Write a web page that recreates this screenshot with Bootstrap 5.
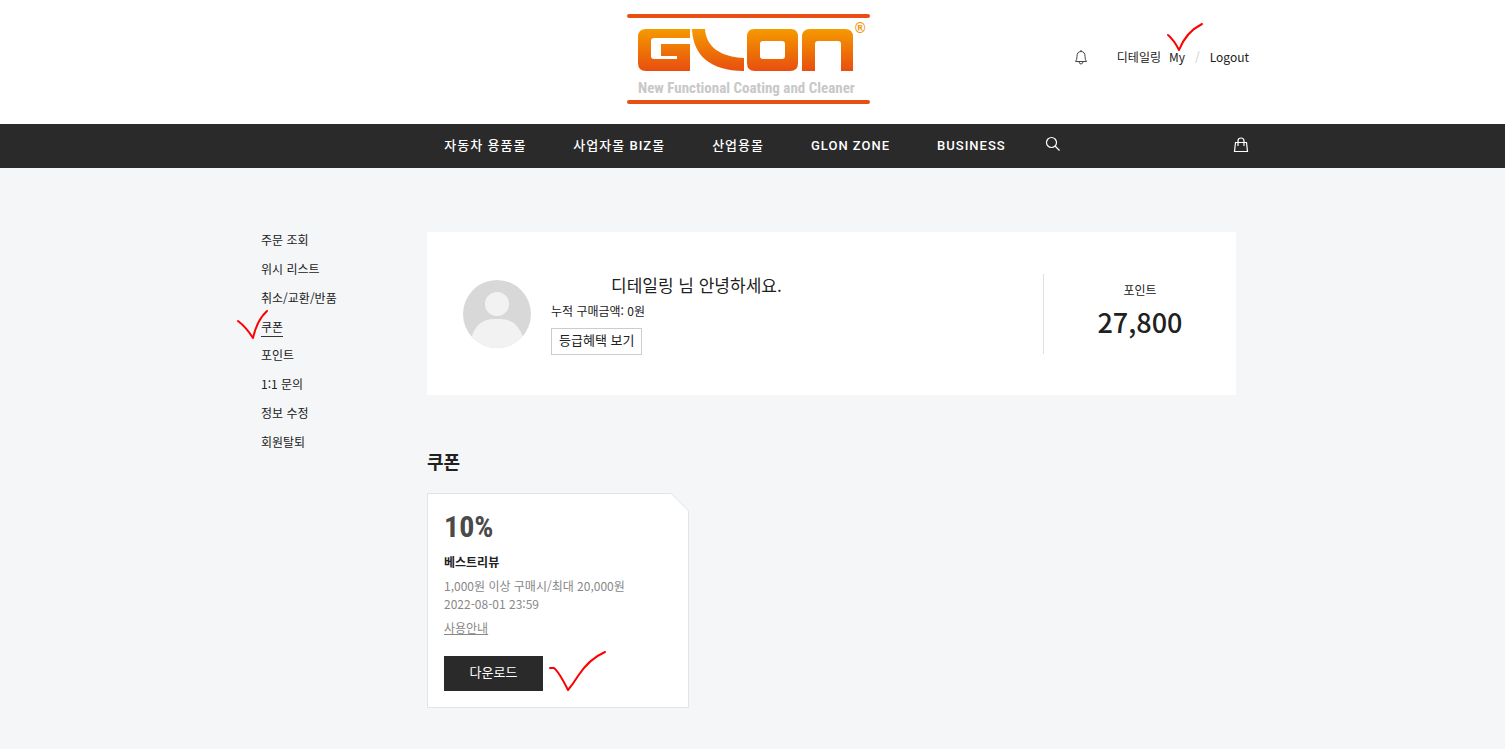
<!DOCTYPE html>
<html lang="ko">
<head>
<meta charset="utf-8">
<meta name="viewport" content="width=device-width, initial-scale=1">
<title>GLON - 쿠폰</title>
<link href="https://cdn.jsdelivr.net/npm/bootstrap@5.3.0/dist/css/bootstrap.min.css" rel="stylesheet">
<style>
  body { background: #f4f6f8; color: #212121; font-family: "Noto Sans CJK KR", sans-serif; font-size: 12px; line-height: 18px; }
  a { color: inherit; text-decoration: none; }
  .wrap { max-width: 993px; margin: 0 auto; }
  .thirds { display: grid; grid-template-columns: 1fr auto 1fr; align-items: center; }
  .tick { position: absolute; pointer-events: none; }
  .tick, .tick-down { fill: none; stroke: #f00; stroke-width: 2; stroke-linecap: round; stroke-linejoin: round; }
  .tick-my { left: -3px; bottom: 14px; }
  .tick-side { left: -25px; bottom: -5px; }
  .tick-down { margin: -6px 0 -1px; }
  .site-head { min-height: 124px; padding-bottom: 6px; }
  .logo { margin-right: 9px; }
  .slash { color: #ccc; margin: 0 10px; }
  .main-nav { background: #2a2a2a; color: #fff; }
  .main-nav .thirds { min-height: 44px; }
  .menu { gap: 47px; font: 500 13px/20px Roboto, "Noto Sans CJK KR", sans-serif; letter-spacing: 1px; }
  .icon-btn { background: none; border: 0; padding: 0; color: inherit; line-height: 0; }
  .main-nav .icon-btn { padding-bottom: 4px; }
  .menu .icon-btn { margin-left: -8px; }
  .page { padding: 63px 13px 41px 5px; }
  .page main { padding-top: 1px; }
  .side { flex: 0 0 166px; gap: 11px; }
  .side .active { border-bottom: 1px solid #333; margin-bottom: -2px; }
  .profile { min-height: 163px; padding-left: 36px; }
  .hello { font-size: 17px; line-height: 24px; font-weight: 400; margin: 0 0 0 60px; }
  .total { margin-top: 5px; }
  .btn-grade { border: 1px solid #ccc; border-radius: 0; font-size: 13px; line-height: 20px; padding: 1px 7px 4px; color: #212121; margin-top: 8px; }
  .points { flex: 0 0 193px; min-height: 80px; border-left: 1px solid #e0e0e0; padding-top: 7px; }
  .points strong { font-size: 27px; line-height: 46px; font-weight: 500; }
  .section-title { font-size: 18px; line-height: 26px; font-weight: 700; margin: 53px 0 19px; }
  .coupon { width: 262px; background: #e2e5e8; padding: 1px; clip-path: polygon(0 0, 244px 0, 100% 18px, 100% 100%, 0 100%); }
  .coupon-in { background: #fff; padding: 18px 16px 16px; clip-path: polygon(0 0, 243px 0, 100% 17px, 100% 100%, 0 100%); }
  .rate { font: 700 30px/30px "Roboto Condensed", Roboto, sans-serif; color: #4a4a4a; }
  .coupon-name { margin-top: 11px; }
  .coupon-info { margin-top: 6px; }
  .guide { margin-top: 6px; }
  .coupon-action { margin-top: 19px; }
  .muted { color: #888; }
  .btn-down { background: #2a2a2a; color: #fff; border: 0; border-radius: 0; width: 99px; height: 35px; font-size: 13px; line-height: 18px; padding: 0 0 4px; }
</style>
</head>
<body>
<header class="bg-white">
  <div class="wrap thirds site-head">
    <span></span>
    <a href="#" class="logo" aria-label="GLON">
      <svg class="d-block" width="243" height="92" viewBox="0 0 243 92">
        <defs><linearGradient id="og" gradientUnits="userSpaceOnUse" x1="0" y1="16" x2="0" y2="58"><stop offset="0" stop-color="#f59a00"/><stop offset="1" stop-color="#e84e0f"/></linearGradient></defs>
        <path d="M2 3H241M2 89H241" stroke="#e94e12" stroke-width="4" stroke-linecap="round"/>
        <g fill="url(#og)">
          <path d="M63 16V25H27Q24 25 24 28V43Q24 46 27 46H50V43H34V31H63V58H19Q11 58 11 50V24Q11 16 19 16Z"/>
          <path d="M65 16H78C79 34 94 44 117 45V58C83 58 66 42 65 16Z"/>
          <path fill-rule="evenodd" d="M127 16H164Q171 16 171 24V50Q171 58 163 58H128Q120 58 120 50V24Q120 16 127 16ZM136 28Q133 28 133 31V43Q133 46 136 46H155Q158 46 158 43V31Q158 28 155 28Z"/>
          <path d="M175 58V24Q175 16 183 16H218Q226 16 226 24V58H214V31Q214 28 211 28H191Q188 28 188 31V58Z"/>
        </g>
        <text x="228" y="20" font-family="Liberation Sans" font-size="14" font-weight="700" fill="#f39200">®</text>
        <text x="11" y="80" font-family="Roboto Condensed, Roboto, sans-serif" font-size="15" font-weight="700" fill="#c8c8c8">New Functional Coating and Cleaner</text>
      </svg>
    </a>
    <div class="d-flex justify-content-end align-items-center mb-1">
      <button class="icon-btn me-4" type="button" aria-label="알림">
        <svg width="16" height="18" viewBox="1 0 16 18" fill="none" stroke="#444"><path d="M3.500 13.500Q5 12 5 8.500Q5 3.500 9 3.500T13 8.500Q13 12 14.500 13.500ZM9 3.500V2M7 14Q7.500 16 9 16T11 14"/></svg>
      </button>
      <a href="#" class="ms-1">디테일링</a>
      <a href="#" class="ms-2 position-relative">My
        <svg class="tick tick-my" width="38" height="30" viewBox="0 0 38 30"><path d="M2 13Q8 18 13 28Q20 10 36 2"/></svg></a>
      <span class="slash">/</span>
      <a href="#">Logout</a>
    </div>
  </div>
</header>
<nav class="main-nav">
  <div class="wrap thirds">
    <span></span>
    <div class="menu d-flex align-items-center">
      <a href="#">자동차 용품몰</a><a href="#">사업자몰 BIZ몰</a><a href="#">산업용몰</a><a href="#">GLON ZONE</a><a href="#">BUSINESS</a>
      <button class="icon-btn" type="button" aria-label="검색">
        <svg width="16" height="16" viewBox="0 0 16 16" fill="none" stroke="#fff" stroke-width="1.200"><circle cx="6.500" cy="6.500" r="5"/><path d="M10 10L14.500 14.500"/></svg>
      </button>
    </div>
    <div class="text-end">
      <button class="icon-btn" type="button" aria-label="장바구니">
        <svg width="16" height="18" viewBox="0 0 16 18" fill="none" stroke="#fff" stroke-width="1.200"><path d="M2.500 6.500H13.500L14.500 15.500H1.500ZM5 10V5Q5 2 8 2T11 5V10"/></svg>
      </button>
    </div>
  </div>
</nav>
<div class="wrap page d-flex">
  <aside class="side d-flex flex-column align-items-start">
    <a href="#">주문 조회</a><a href="#">위시 리스트</a><a href="#">취소/교환/반품</a>
    <a href="#" class="active position-relative">쿠폰
      <svg class="tick tick-side" width="34" height="32" viewBox="0 0 34 32"><path d="M2 12Q10 18 17 29Q21 11 31 2"/></svg></a>
    <a href="#">포인트</a><a href="#">1:1 문의</a><a href="#">정보 수정</a><a href="#">회원탈퇴</a>
  </aside>
  <main class="flex-grow-1">
    <section class="profile bg-white d-flex align-items-center">
      <svg class="flex-shrink-0" width="68" height="68" viewBox="0 0 68 68"><clipPath id="av"><circle cx="34" cy="34" r="34"/></clipPath><g clip-path="url(#av)"><path fill="#d8d8d8" d="M0 0H68V68H0Z"/><circle cx="34" cy="24" r="12" fill="#f2f2f2"/><path fill="#f2f2f2" d="M8 68V60Q12 39 32 39H37Q55 39 60 58V68Z"/></g></svg>
      <div class="flex-grow-1 ps-3 ms-1">
        <h1 class="hello">디테일링 님 안녕하세요.</h1>
        <div class="total">누적 구매금액: 0원</div>
        <button type="button" class="btn btn-grade">등급혜택 보기</button>
      </div>
      <div class="points text-center">
        <div>포인트</div>
        <strong>27,800</strong>
      </div>
    </section>
    <h2 class="section-title">쿠폰</h2>
    <section class="coupon">
      <div class="coupon-in">
        <div class="rate">10%</div>
        <div class="coupon-name fw-bold">베스트리뷰</div>
        <div class="coupon-info muted">1,000원 이상 구매시/최대 20,000원<br>2022-08-01 23:59</div>
        <a href="#" class="guide muted text-decoration-underline d-inline-block">사용안내</a>
        <div class="coupon-action d-flex align-items-center gap-1">
          <button type="button" class="btn btn-down">다운로드</button>
          <svg class="tick-down" width="62" height="42" viewBox="0 0 62 42"><path d="M3 18H7Q12 22 21 40Q26 34 31 26Q42 9 58 2"/></svg>
        </div>
      </div>
    </section>
  </main>
</div>
<script src="https://cdn.jsdelivr.net/npm/bootstrap@5.3.0/dist/js/bootstrap.bundle.min.js"></script>
</body>
</html>
